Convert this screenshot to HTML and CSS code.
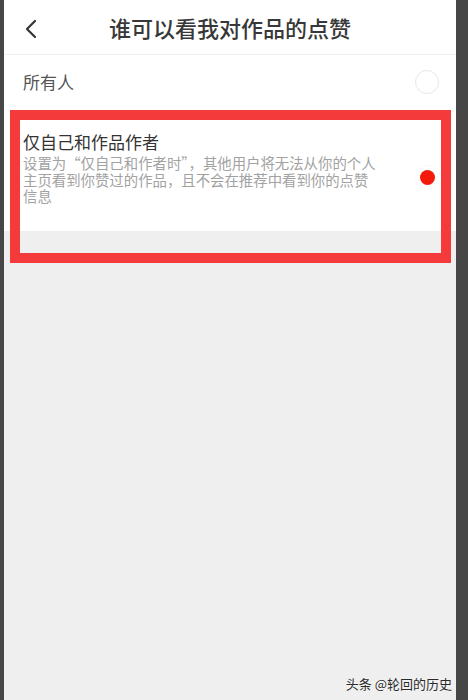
FILE: index.html
```html
<!DOCTYPE html>
<html lang="zh-CN">
<head>
    <meta charset="UTF-8">
    <meta name="viewport" content="width=device-width, initial-scale=1.0">
    <title>点赞可见范围</title>
    <link rel="stylesheet" href="styles.css">
</head>
<body>
    <div class="screen">
        <div class="header">
            <button class="back" aria-label="返回">
                <svg width="14" height="20" viewBox="0 0 14 20">
                    <path d="M11 2 L3 10 L11 18" fill="none" stroke="#333" stroke-width="2.2" stroke-linecap="round" stroke-linejoin="round"/>
                </svg>
            </button>
            <h1>谁可以看我对作品的点赞</h1>
        </div>

        <div class="options">
            <div class="option">
                <div class="option-text">
                    <div class="option-title light">所有人</div>
                </div>
                <span class="radio"></span>
            </div>
            <div class="option option-tall">
                <div class="option-text">
                    <div class="option-title">仅自己和作品作者</div>
                    <p class="option-desc">设置为“仅自己和作者时”，其他用户将无法从你的个人主页看到你赞过的作品，且不会在推荐中看到你的点赞信息</p>
                </div>
                <span class="radio checked"></span>
            </div>
        </div>

        <div class="highlight"></div>
        <div class="watermark">头条 @轮回的历史</div>
    </div>
</body>
</html>
```

FILE: styles.css
```css
body {
    margin: 0;
    background-color: #464646;
    font-family: "Noto Sans CJK SC", "Noto Sans", sans-serif;
}
.screen {
    position: relative;
    width: 452px;
    height: 700px;
    margin-left: 4px;
    background-color: #efefef;
    overflow: hidden;
}
.header {
    position: relative;
    height: 54px;
    background: #fff;
    border-bottom: 1px solid #f0f0f0;
    display: flex;
    align-items: center;
    justify-content: center;
}
.header h1 {
    margin: 0;
    font-size: 22px;
    font-weight: 500;
    color: #383838;
    line-height: 1;
}
.back {
    position: absolute;
    left: 20px;
    top: 19px;
    padding: 0;
    border: none;
    background: none;
}
.back svg {
    display: block;
}
.options {
    background: #fff;
}
.option {
    display: flex;
    align-items: center;
    justify-content: space-between;
    height: 53px;
    padding: 0 17px 0 19px;
}
.option-tall {
    height: 123px;
    align-items: flex-start;
}
.option-tall .option-text {
    padding-top: 22px;
}
.option-tall .radio {
    margin-top: 57px;
}
.option-title {
    font-size: 17px;
    color: #333;
    line-height: 24px;
}
.option-title.light {
    color: #555;
}
.option-desc {
    margin: 1px 0 0;
    width: 356px;
    font-size: 14.4px;
    line-height: 16.5px;
    color: #a2a2a2;
}
.radio {
    flex: none;
    box-sizing: border-box;
    width: 24px;
    height: 24px;
    border: 1.5px solid #e8e8e8;
    border-radius: 50%;
    display: flex;
    align-items: center;
    justify-content: center;
}
.radio.checked {
    border-color: #fbfbfb;
}
.radio.checked::after {
    content: "";
    width: 15px;
    height: 15px;
    border-radius: 50%;
    background: #f3190b;
}
.highlight {
    position: absolute;
    left: 6px;
    top: 110px;
    width: 421px;
    height: 133px;
    border: 10px solid #f43a3a;
}
.watermark {
    position: absolute;
    right: 4px;
    top: 674px;
    font-size: 13px;
    color: #2a2a2a;
    white-space: nowrap;
    text-shadow: 0 0 2px #fff;
}
```
